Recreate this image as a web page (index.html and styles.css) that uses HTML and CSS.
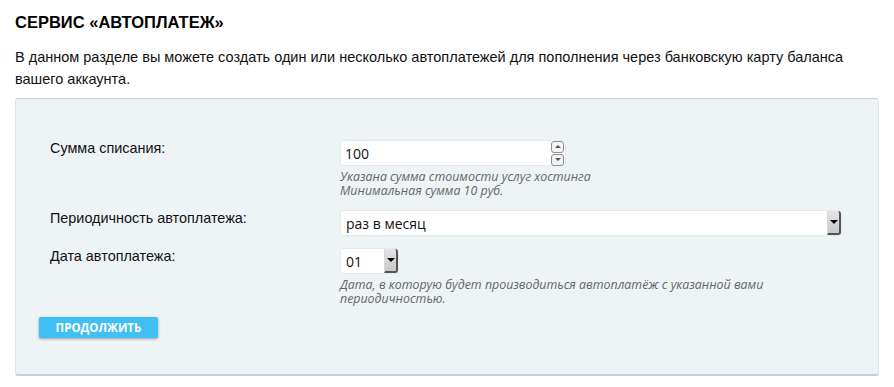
FILE: index.html
```html
<!DOCTYPE html>
<html lang="ru">
<head>
  <meta charset="UTF-8" />
  <title>Сервис «Автоплатеж»</title>
  <link rel="stylesheet" href="styles.css">
</head>
<body>
  <div class="page">
    <h1>СЕРВИС «АВТОПЛАТЕЖ»</h1>
    <p class="intro">В данном разделе вы можете создать один или несколько автоплатежей для пополнения через банковскую карту баланса вашего аккаунта.</p>

    <form class="panel">
      <div class="row">
        <label class="row-label" for="summa">Сумма списания:</label>
        <div class="row-control">
          <div class="field field-number">
            <input type="text" id="summa" value="100" />
            <div class="spin">
              <span class="spin-btn"><i class="tri-up"></i></span>
              <span class="spin-btn"><i class="tri-down"></i></span>
            </div>
          </div>
          <div class="hint">Указана сумма стоимости услуг хостинга<br>Минимальная сумма 10 руб.</div>
        </div>
      </div>

      <div class="row">
        <label class="row-label">Периодичность автоплатежа:</label>
        <div class="row-control">
          <div class="field field-select">
            <span class="select-value">раз в месяц</span>
            <span class="select-arrow"><i class="tri-down tri-dark"></i></span>
          </div>
        </div>
      </div>

      <div class="row">
        <label class="row-label">Дата автоплатежа:</label>
        <div class="row-control">
          <div class="field field-select field-day">
            <span class="select-value">01</span>
            <span class="select-arrow"><i class="tri-down tri-dark"></i></span>
          </div>
          <div class="hint">Дата, в которую будет производиться автоплатёж с указанной вами<br>периодичностью.</div>
        </div>
      </div>

      <button type="button" class="button">ПРОДОЛЖИТЬ</button>
    </form>
  </div>
</body>
</html>
```

FILE: styles.css
```css
* {
  box-sizing: border-box;
  margin: 0;
  padding: 0;
}

body {
  font-family: "Liberation Sans", Arial, sans-serif;
  color: #111;
  background: #ffffff;
}

.page {
  padding: 12px 15px 0;
}

h1 {
  font-size: 16.5px;
  line-height: 20px;
  font-weight: bold;
  color: #000;
}

.intro {
  font-size: 14.5px;
  line-height: 22px;
  margin-top: 14px;
  color: #111;
}

.panel {
  margin-top: 8px;
  background-color: #eef3f6;
  border: 1px solid #dde4e9;
  border-top-color: #c9d1d7;
  border-bottom: 2px solid #c9d1d7;
  border-radius: 3px;
  padding: 41px 23px 36px;
}

.row {
  display: flex;
  padding-left: 11px;
  margin-bottom: 12px;
}

.row-label {
  width: 290px;
  flex-shrink: 0;
  font-size: 14.4px;
  line-height: 16px;
  color: #111;
}

.row-control {
  flex: 1;
  padding-right: 13px;
}

.field {
  display: flex;
  align-items: center;
  background: #ffffff;
  border: 1px solid #e3e9ed;
  border-radius: 3px;
  height: 26px;
  font-family: "Open Sans", sans-serif;
  font-size: 14px;
  color: #111;
}

.field-number {
  width: 226px;
  padding-left: 4px;
}

.field-number input {
  flex: 1;
  min-width: 0;
  border: none;
  outline: none;
  background: transparent;
  font: inherit;
  color: inherit;
}

.spin {
  display: flex;
  flex-direction: column;
  gap: 1px;
  margin-right: 1px;
}

.spin-btn {
  width: 13px;
  height: 12px;
  border: 1px solid #8e8e8e;
  border-radius: 3px;
  background: #f4f4f4;
  display: flex;
  align-items: center;
  justify-content: center;
}

.tri-up,
.tri-down {
  display: block;
  width: 0;
  height: 0;
  border-left: 3px solid transparent;
  border-right: 3px solid transparent;
}

.tri-up {
  border-bottom: 3px solid #555;
}

.tri-down {
  border-top: 3px solid #555;
}

.tri-dark {
  border-left-width: 4px;
  border-right-width: 4px;
  border-top: 4px solid #000;
}

.field-select {
  padding-left: 5px;
  justify-content: space-between;
  align-items: stretch;
}

.select-value {
  display: flex;
  align-items: center;
}

.select-arrow {
  width: 14px;
  background: linear-gradient(#e4e4e4, #c9c9c9);
  border-right: 2px solid #555;
  border-bottom: 2px solid #555;
  border-left: 1px solid #d8d8d8;
  border-radius: 0 3px 3px 0;
  display: flex;
  align-items: center;
  justify-content: center;
}

.field-day {
  width: 59px;
}

.hint {
  margin-top: 4px;
  font-family: "Open Sans", sans-serif;
  font-style: italic;
  font-size: 12.4px;
  line-height: 14px;
  color: #666;
}

.button {
  display: inline-block;
  margin-top: -2px;
  width: 119px;
  height: 21px;
  background-color: #40bff5;
  color: #ffffff;
  border: none;
  border-radius: 2px;
  box-shadow: 0 1px 3px rgba(0, 0, 0, 0.35);
  font-family: "Open Sans", sans-serif;
  font-weight: bold;
  font-size: 11.5px;
  cursor: pointer;
}
```
